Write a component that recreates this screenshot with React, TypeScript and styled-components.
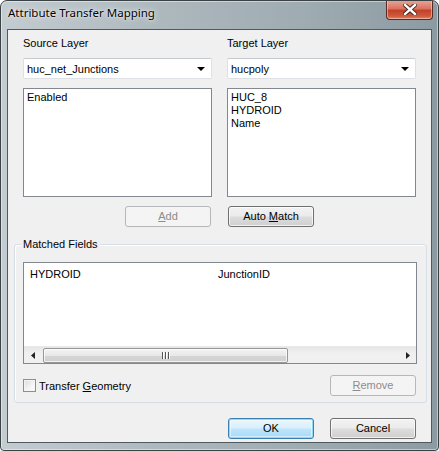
import React from "react";
import styled, { createGlobalStyle, css } from "styled-components";

const Global = createGlobalStyle`
  html, body { margin: 0; padding: 0; background: #ffffff; }
  body { font-family: "Liberation Sans", Arial, sans-serif; font-size: 11px; color: #000; }
  * { box-sizing: border-box; }
`;

const Window = styled.div`
  position: relative;
  width: 439px;
  height: 451px;
  border: 1px solid #3b4246;
  border-radius: 7px 7px 4px 4px;
  background: linear-gradient(90deg, #c3ccd0 0%, #aeb9be 35%, #9eabb1 70%, #8c9aa1 100%);
  box-shadow: inset 0 0 0 1px rgba(255, 255, 255, 0.45);
  display: flex;
  flex-direction: column;
  overflow: hidden;
`;

const TitleBar = styled.div`
  height: 28px;
  display: flex;
  align-items: flex-start;
  justify-content: space-between;
  padding-left: 7px;
`;

const Title = styled.div`
  font-family: "Noto Sans", "Open Sans", sans-serif;
  font-size: 11.5px;
  line-height: 16px;
  margin-top: 4px;
  color: #000;
  text-shadow: 0 0 6px rgba(255, 255, 255, 0.9), 0 0 2px rgba(255, 255, 255, 0.9);
`;

const CloseButton = styled.div`
  width: 47px;
  height: 20px;
  margin-right: 5px;
  margin-top: -1px;
  border: 1px solid #5a2a24;
  border-top: none;
  border-radius: 0 0 4px 4px;
  background: linear-gradient(180deg, #e9a899 0%, #d8745f 45%, #c3412a 55%, #cf5a3c 85%, #e0876a 100%);
  box-shadow: inset 0 0 0 1px rgba(255, 220, 210, 0.5);
  display: flex;
  align-items: center;
  justify-content: center;
`;

const Client = styled.div`
  margin: 0 6px 7px 6px;
  flex: 1;
  border: 1px solid #4e5a60;
  background: #f0f0f0;
  display: flex;
  flex-direction: column;
`;

const Columns = styled.div`
  display: grid;
  grid-template-columns: 189px 189px;
  column-gap: 15px;
  padding: 0 14px 0 15px;
`;

const Column = styled.div`
  display: flex;
  flex-direction: column;
`;

const Label = styled.div`
  height: 13px;
  line-height: 13px;
  margin-top: 7px;
`;

const Combo = styled.div`
  margin-top: 8px;
  height: 21px;
  background: #fff;
  border: 1px solid #dde1e5;
  border-top-color: #c5cacf;
  border-radius: 2px;
  display: flex;
  align-items: center;
  padding-left: 3px;
  justify-content: space-between;
`;

const ComboArrow = styled.div`
  width: 0;
  height: 0;
  margin-right: 6px;
  border-left: 4px solid transparent;
  border-right: 4px solid transparent;
  border-top: 4px solid #000;
`;

const ListBox = styled.div<{ $h: number }>`
  margin-top: 9px;
  height: ${(p) => p.$h}px;
  background: #fff;
  border: 1px solid #828790;
  padding: 2px 3px;
  line-height: 13px;
`;

const ButtonRow = styled.div`
  display: grid;
  grid-template-columns: 189px 189px;
  column-gap: 15px;
  padding: 0 14px 0 15px;
  margin-top: 9px;
`;

const Button = styled.div<{ $disabled?: boolean; $default?: boolean; $side?: "start" | "end" }>`
  width: 86px;
  height: 21px;
  border: 1px solid #707070;
  border-radius: 3px;
  background: linear-gradient(180deg, #f2f2f2 0%, #ebebeb 48%, #dddddd 52%, #cfcfcf 100%);
  box-shadow: inset 0 0 0 1px rgba(255, 255, 255, 0.7);
  display: flex;
  align-items: center;
  justify-content: center;
  line-height: 13px;
  justify-self: ${(p) => (p.$side === "end" ? "end" : "start")};
  ${(p) =>
    p.$side === "end" &&
    css`
      margin-right: 1px;
    `}
  ${(p) =>
    p.$side === "start" &&
    css`
      margin-left: 1px;
    `}
  ${(p) =>
    p.$disabled &&
    css`
      border-color: #b5b8ba;
      background: #f4f4f4;
      color: #8c8c8c;
      box-shadow: none;
    `}
  ${(p) =>
    p.$default &&
    css`
      border-color: #3c7fb1;
      background: linear-gradient(180deg, #eaf6fd 0%, #d9f0fc 48%, #bee6fd 52%, #a7d9f5 100%);
      box-shadow: inset 0 0 0 1px #90d8f8, inset 0 0 0 2px rgba(255, 255, 255, 0.5);
    `}
`;

const U = styled.span`
  text-decoration: underline;
`;

const Group = styled.div`
  position: relative;
  margin: 17px 4px 0 6px;
  height: 159px;
  border: 1px solid #d5dfe5;
  border-radius: 3px;
  box-shadow: inset 1px 1px 0 #fff;
  display: flex;
  flex-direction: column;
  padding: 0 9px 0 8px;
`;

const Legend = styled.div`
  position: absolute;
  left: 6px;
  top: -7px;
  padding: 0 2px;
  background: #f0f0f0;
  line-height: 13px;
`;

const MatchedList = styled.div`
  margin-top: 17px;
  height: 102px;
  background: #fff;
  border: 1px solid #828790;
  display: flex;
  flex-direction: column;
`;

const MatchRows = styled.div`
  flex: 1;
  padding: 5px 0 0 6px;
`;

const MatchRow = styled.div`
  display: grid;
  grid-template-columns: 188px 1fr;
  line-height: 13px;
`;

const HScroll = styled.div`
  height: 17px;
  background: linear-gradient(180deg, #e6e6e6 0%, #f0f0f0 40%, #f0f0f0 100%);
  display: flex;
  align-items: center;
  border-top: 1px solid #e9e9e9;
`;

const ScrollArrow = styled.div`
  width: 17px;
  height: 16px;
  display: flex;
  align-items: center;
  justify-content: center;
`;

const Track = styled.div`
  flex: 1;
  height: 16px;
  display: flex;
  align-items: center;
  padding-left: 2px;
`;

const Thumb = styled.div`
  width: 245px;
  height: 15px;
  border: 1px solid #979797;
  border-radius: 2px;
  background: linear-gradient(180deg, #f3f3f3 0%, #e8e8e8 50%, #d6d6d6 51%, #d0d0d0 100%);
  box-shadow: inset 0 0 0 1px rgba(255, 255, 255, 0.7);
  display: flex;
  align-items: center;
  justify-content: center;
`;

const Grip = styled.div`
  display: flex;
  gap: 1px;
  & > span {
    width: 2px;
    height: 7px;
    background: #555;
    border-right: 1px solid #fff;
  }
`;

const GroupFooter = styled.div`
  display: flex;
  align-items: center;
  justify-content: space-between;
  margin-top: 11px;
  padding-right: 1px;
`;

const CheckWrap = styled.div`
  display: flex;
  align-items: center;
  gap: 3px;
`;

const CheckBox = styled.div`
  width: 13px;
  height: 13px;
  border: 1px solid #8e8f8f;
  background: linear-gradient(135deg, #dcdcdc 0%, #f4f4f4 60%, #ffffff 100%);
  box-shadow: inset 0 0 0 1px #f4f4f4;
`;

const Footer = styled.div`
  display: flex;
  justify-content: flex-end;
  gap: 16px;
  padding-right: 15px;
  margin-top: 15px;
`;

export default function App() {
  return (
    <>
      <Global />
      <Window>
        <TitleBar>
          <Title>Attribute Transfer Mapping</Title>
          <CloseButton>
            <svg width="14" height="11" viewBox="0 0 14 11">
              <path
                d="M2 1 L12 10 M12 1 L2 10"
                stroke="#3a1a14"
                strokeWidth="4.2"
                strokeLinecap="square"
              />
              <path
                d="M2 1 L12 10 M12 1 L2 10"
                stroke="#ffffff"
                strokeWidth="2.4"
                strokeLinecap="square"
              />
            </svg>
          </CloseButton>
        </TitleBar>
        <Client>
          <Columns>
            <Column>
              <Label>Source Layer</Label>
              <Combo>
                <span>huc_net_Junctions</span>
                <ComboArrow />
              </Combo>
              <ListBox $h={109}>Enabled</ListBox>
            </Column>
            <Column>
              <Label>Target Layer</Label>
              <Combo>
                <span>hucpoly</span>
                <ComboArrow />
              </Combo>
              <ListBox $h={109}>
                <div>HUC_8</div>
                <div>HYDROID</div>
                <div>Name</div>
              </ListBox>
            </Column>
          </Columns>
          <ButtonRow>
            <Button $disabled $side="end">
              <U>A</U>dd
            </Button>
            <Button $side="start">
              Auto&nbsp;<U>M</U>atch
            </Button>
          </ButtonRow>
          <Group>
            <Legend>Matched Fields</Legend>
            <MatchedList>
              <MatchRows>
                <MatchRow>
                  <span>HYDROID</span>
                  <span>JunctionID</span>
                </MatchRow>
              </MatchRows>
              <HScroll>
                <ScrollArrow>
                  <svg width="4" height="7" viewBox="0 0 4 7">
                    <path d="M4 0 L0 3.5 L4 7 Z" fill="#222" />
                  </svg>
                </ScrollArrow>
                <Track>
                  <Thumb>
                    <Grip>
                      <span />
                      <span />
                      <span />
                    </Grip>
                  </Thumb>
                </Track>
                <ScrollArrow>
                  <svg width="4" height="7" viewBox="0 0 4 7">
                    <path d="M0 0 L4 3.5 L0 7 Z" fill="#222" />
                  </svg>
                </ScrollArrow>
              </HScroll>
            </MatchedList>
            <GroupFooter>
              <CheckWrap>
                <CheckBox />
                <span>
                  Transfer <U>G</U>eometry
                </span>
              </CheckWrap>
              <Button $disabled>
                <U>R</U>emove
              </Button>
            </GroupFooter>
          </Group>
          <Footer>
            <Button $default>OK</Button>
            <Button>Cancel</Button>
          </Footer>
        </Client>
      </Window>
    </>
  );
}
